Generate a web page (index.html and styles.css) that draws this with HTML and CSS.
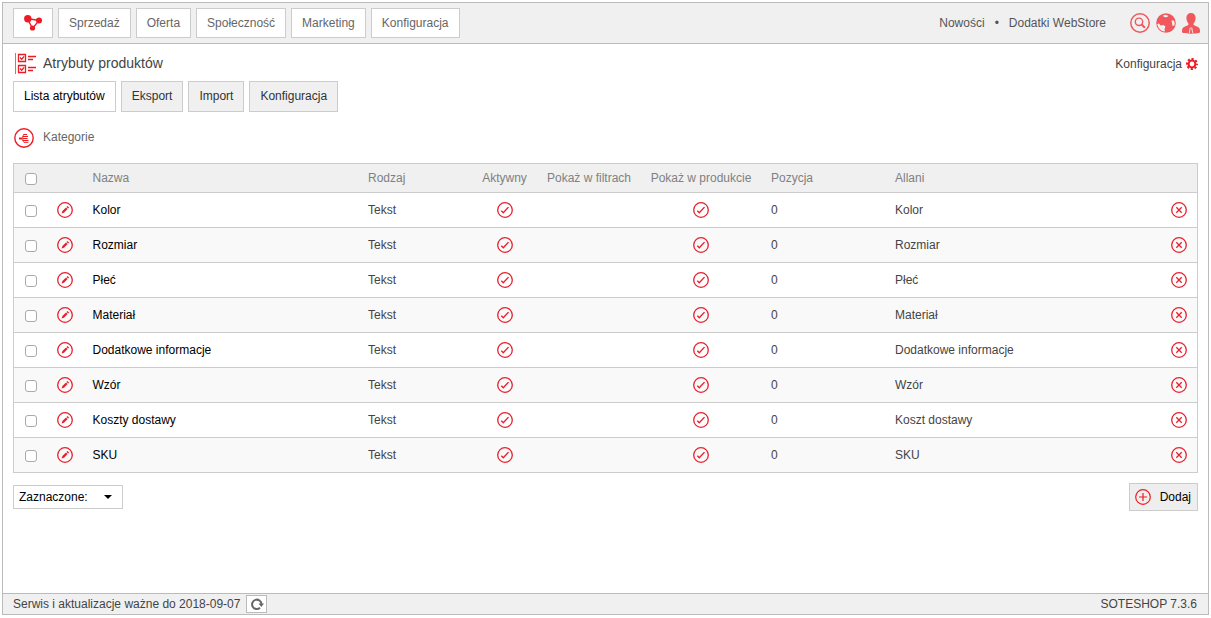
FILE: index.html
```html
<!DOCTYPE html>
<html lang="pl">
<head>
<meta charset="utf-8">
<title>Atrybuty produktów</title>
<link rel="stylesheet" href="styles.css">
</head>
<body>
<svg class="sprite" aria-hidden="true">
  <symbol id="edit" viewBox="0 0 16 16"><circle cx="8" cy="8" r="7.300" fill="none" stroke="currentColor" stroke-width="1.300"/><path d="M4.600 11.500l.8-2.400 3.600-3.600 1.600 1.600-3.600 3.600zM9.500 5l1-1 1.600 1.600-1 1z" fill="currentColor"/></symbol>
  <symbol id="tick" viewBox="0 0 16 16"><circle cx="8" cy="8" r="7.300" fill="none" stroke="currentColor" stroke-width="1.300"/><path d="M4.300 8.800l2 2 5.200-5.700" fill="none" stroke="currentColor" stroke-width="1.400"/></symbol>
  <symbol id="cross" viewBox="0 0 16 16"><circle cx="8" cy="8" r="7.300" fill="none" stroke="currentColor" stroke-width="1.300"/><path d="M5.300 5.300l5.400 5.400M10.700 5.300l-5.400 5.400" fill="none" stroke="currentColor" stroke-width="1.300"/></symbol>
</svg>
<div class="frame">
  <header class="topbar">
    <nav class="menu">
      <a class="menu-item" href="#" aria-label="Start"><svg width="18" height="16" viewBox="0 0 18 16"><path d="M3.500 3.500L15 5.500 8.500 13.500z" fill="none" stroke="#ed1c24" stroke-width="1.300"/><circle cx="3.800" cy="3.800" r="3.700" fill="#ed1c24"/><circle cx="15" cy="5.500" r="3" fill="#ed1c24"/><circle cx="8.500" cy="13" r="2.600" fill="#ed1c24"/></svg></a>
      <a class="menu-item" href="#">Sprzedaż</a>
      <a class="menu-item" href="#">Oferta</a>
      <a class="menu-item" href="#">Społeczność</a>
      <a class="menu-item" href="#">Marketing</a>
      <a class="menu-item" href="#">Konfiguracja</a>
    </nav>
    <div class="links"><a href="#">Nowości</a><span>•</span><a href="#">Dodatki WebStore</a></div>
    <div class="tools">
      <a href="#" aria-label="Szukaj"><svg width="20" height="20" viewBox="0 0 20 20" fill="none" stroke="#f0585e"><circle cx="10" cy="10" r="9.200" stroke-width="1.500"/><circle cx="9" cy="8.800" r="3.700" stroke-width="1.400"/><path d="M11.700 11.500l3.200 3.200" stroke-width="2"/></svg></a>
      <a href="#" aria-label="Język"><svg width="20" height="20" viewBox="0 0 20 20"><circle cx="10" cy="10" r="9.800" fill="#f0585e"/><path d="M1.200 11L3 10.500 4.500 12.500 7.500 12 9.500 13.500 8.500 16 9 18.600Q2.500 18 1.200 11zM7 2.500L10 1.800 12.500 3 10.500 4.200 8 4zM15.500 7.500L18 7.500 18.700 10 18.400 12.500 16.500 13z" fill="#f0f0f0"/></svg></a>
      <a href="#" aria-label="Konto"><svg width="18" height="21" viewBox="0 0 18 21" fill="#f0585e"><path d="M9 0c3 0 4.600 2 4.600 5 0 2.300-1 4.300-2 5.500v1.600l4.400 1.800c1.500.7 2 2 2 4v1.600c-2 .8-5 1.200-9 1.200s-7-.4-9-1.200v-1.600c0-2 .5-3.300 2-4l4.400-1.800v-1.600C5.400 9.300 4.400 7.300 4.400 5c0-3 1.600-5 4.600-5z"/><path d="M8.300 14.500L7.300 20M9.700 14.500l1 5.500" fill="none" stroke="#f0f0f0" stroke-width=".9"/></svg></a>
    </div>
  </header>
  <main class="content">
    <div class="heading">
      <h1><svg width="21" height="21" viewBox="0 0 21 21" fill="none" stroke="#ed1c24"><path d="M.5 0v21" stroke-opacity=".7"/><path d="M3.500 1.500h7v7h-7zM3.500 12.500h7v7h-7z" stroke-width="1.300"/><path d="M5 4.600l1.700 1.700 2.500-2.900M5 15.600l1.700 1.700 2.500-2.900" stroke-width="1.400"/><path d="M13 3.500h8M13 6.500h5M13 14.500h8M13 17.500h5" stroke-width="1.300"/></svg><span>Atrybuty produktów</span></h1>
      <a class="config" href="#">Konfiguracja <svg width="12" height="12" viewBox="0 0 12 12" fill="none" stroke="#ed1c24"><circle cx="6" cy="6" r="3.400" stroke-width="2"/><circle cx="6" cy="6" r="5" stroke-width="2" stroke-dasharray="2.200 1.727" stroke-dashoffset="1.100"/></svg></a>
    </div>
    <nav class="tabs">
      <a class="tab active" href="#">Lista atrybutów</a>
      <a class="tab" href="#">Eksport</a>
      <a class="tab" href="#">Import</a>
      <a class="tab" href="#">Konfiguracja</a>
    </nav>
    <a class="category" href="#"><svg width="20" height="20" viewBox="0 0 20 20" fill="none" stroke="#ed1c24"><circle cx="10" cy="10" r="9.200" stroke-width="1.400"/><path d="M5 10.500h3.500" stroke-width="2"/><path d="M9.500 6.500h3.500M8.500 8.500h5.500M9 10.500h4.500M8.500 12.500h6M10 14.300h4.500" stroke-width="1"/><path d="M10 6l-1.200 2.500v4L10 14.500" stroke-width=".8"/></svg><span>Kategorie</span></a>
    <table class="attributes">
      <colgroup><col class="c-check"><col class="c-edit"><col><col class="c-type"><col class="c-active"><col class="c-filter"><col class="c-product"><col class="c-position"><col><col class="c-delete"></colgroup>
      <thead><tr><th class="icon"><input type="checkbox" aria-label="Zaznacz wszystkie"></th><th></th><th>Nazwa</th><th>Rodzaj</th><th class="flag">Aktywny</th><th class="flag">Pokaż w filtrach</th><th class="flag">Pokaż w produkcie</th><th>Pozycja</th><th>Allani</th><th></th></tr></thead>
      <tbody id="rows"></tbody>
    </table>
    <div class="actions">
      <div class="picker"><select aria-label="Zaznaczone"><option>Zaznaczone:</option></select><svg width="8" height="4" viewBox="0 0 8 4"><path d="M0 0h8L4 4z"/></svg></div>
      <button class="add" type="button"><svg width="16" height="16" viewBox="0 0 16 16" fill="none" stroke="#ed1c24" stroke-width="1.200"><circle cx="8" cy="8" r="7.300"/><path d="M8 4v8M4 8h8"/></svg>Dodaj</button>
    </div>
  </main>
  <footer class="footer">
    <span>Serwis i aktualizacje ważne do 2018-09-07</span>
    <button class="refresh" type="button" aria-label="Odśwież"><svg width="14" height="14" viewBox="0 0 14 14"><path d="M10 10.800A4.700 4.700 0 1 1 11.500 7" fill="none" stroke="#666" stroke-width="2"/><path d="M8.500 6.500H14L11.300 10z" fill="#666"/></svg></button>
    <span class="version">SOTESHOP 7.3.6</span>
  </footer>
</div>
<script src="app.js"></script>
</body>
</html>
```

FILE: styles.css
```css
* { box-sizing: border-box; }
body { margin: 0; font: 12px/16px "Liberation Sans", Arial, sans-serif; color: #444; background: #fff; }
a { color: inherit; text-decoration: none; }
svg { display: block; flex: none; }
button, select { font: inherit; border-radius: 0; }
.sprite { position: absolute; width: 0; height: 0; }
.frame { display: flex; flex-direction: column; min-height: calc(100vh - 5px); margin: 2px 2px 3px; border: 1px solid #bbb; }
.topbar { display: flex; align-items: center; padding: 5px 8px 5px 10px; background: #f0f0f0; border-bottom: 1px solid #bbb; }
.menu { display: flex; gap: 5px; margin-right: auto; }
.menu-item { height: 30px; padding: 6px 10px; border: 1px solid #ccc; background: #fff; color: #666; }
.links { display: flex; gap: 10px; margin-right: 24px; color: #555; }
.tools { display: flex; align-items: center; gap: 6px; }
.content { flex: 1; padding: 8px 10px; }
.heading { display: flex; align-items: center; justify-content: space-between; height: 23px; }
h1 { display: flex; align-items: center; gap: 7px; margin: 0 0 0 2px; font-size: 14px; line-height: 20px; font-weight: normal; }
h1 span, .category span { padding-bottom: 2px; }
.config { display: flex; align-items: center; gap: 4px; }
.tabs { display: flex; gap: 5px; margin-top: 6px; }
.tab { height: 31px; padding: 6px 10px; border: 1px solid #ccc; background: #f0f0f0; color: #333; }
.tab.active { background: #fff; color: #000; }
.category { display: inline-flex; align-items: center; gap: 9px; margin: 16px 0 15px 1px; color: #666; }
.attributes { width: 100%; table-layout: fixed; border-collapse: collapse; border: 1px solid #ccc; }
.attributes tr { border-bottom: 1px solid #ccc; }
.attributes th { height: 29px; padding: 0 10px; background: #f0f0f0; color: #808080; font-weight: normal; text-align: left; white-space: nowrap; }
.attributes td { height: 35px; padding: 0 10px; }
.attributes tbody tr:nth-child(even) { background: #f9f9f9; }
.attributes .icon, .attributes .flag { padding: 0; text-align: center; }
.attributes .name { color: #000; }
.attributes .icon svg, .attributes .flag svg { width: 16px; height: 16px; margin: 0 auto; color: #e8202e; }
.c-check { width: 34px; }
.c-edit { width: 35px; }
.c-type { width: 114px; }
.c-active { width: 65px; }
.c-filter { width: 104px; }
.c-product { width: 120px; }
.c-position { width: 124px; }
.c-delete { width: 37px; }
input[type="checkbox"] { appearance: none; display: block; width: 12px; height: 12px; margin: 2px auto 0; border: 1px solid #aaa; border-radius: 3px; background: #fff; }
input[type="checkbox"]:checked { background: #e8202e; }
.row-button { display: block; margin: 0 auto; padding: 0; border: 0; background: none; }
.actions { display: flex; align-items: center; justify-content: space-between; margin-top: 10px; }
.picker { display: flex; align-items: center; height: 24px; border: 1px solid #ccc; }
.picker select { appearance: none; width: 108px; height: 22px; padding: 0 5px; border: 0; background: transparent; color: #000; }
.picker svg { margin-left: -18px; margin-right: 10px; pointer-events: none; }
.add { display: flex; align-items: center; gap: 9px; height: 28px; padding: 0 6px 0 5px; border: 1px solid #ccc; background: #eee; color: #000; }
.footer { display: flex; align-items: center; gap: 6px; height: 21px; padding: 0 11px 0 10px; border-top: 1px solid #bbb; background: #f0f0f0; }
.refresh { display: flex; align-items: center; justify-content: center; width: 21px; height: 18px; padding: 0; border: 1px solid #bbb; background: #fff; }
.version { margin-left: auto; }
```

FILE: app.js
```js
const attributes = [
  ["Kolor", "Kolor"], ["Rozmiar", "Rozmiar"], ["Płeć", "Płeć"], ["Materiał", "Materiał"],
  ["Dodatkowe informacje", "Dodatkowe informacje"], ["Wzór", "Wzór"],
  ["Koszty dostawy", "Koszt dostawy"], ["SKU", "SKU"]
];
const icon = (name) => `<svg aria-hidden="true"><use href="#${name}"/></svg>`;
document.getElementById("rows").innerHTML = attributes.map(([name, allani]) => `
  <tr>
    <td class="icon"><input type="checkbox" aria-label="Zaznacz: ${name}"></td>
    <td class="icon"><button class="row-button" type="button" aria-label="Edytuj: ${name}">${icon("edit")}</button></td>
    <td><a class="name" href="#">${name}</a></td>
    <td>Tekst</td>
    <td class="flag">${icon("tick")}</td>
    <td></td>
    <td class="flag">${icon("tick")}</td>
    <td>0</td>
    <td>${allani}</td>
    <td class="icon"><button class="row-button" type="button" aria-label="Usuń: ${name}">${icon("cross")}</button></td>
  </tr>`).join("");
```
